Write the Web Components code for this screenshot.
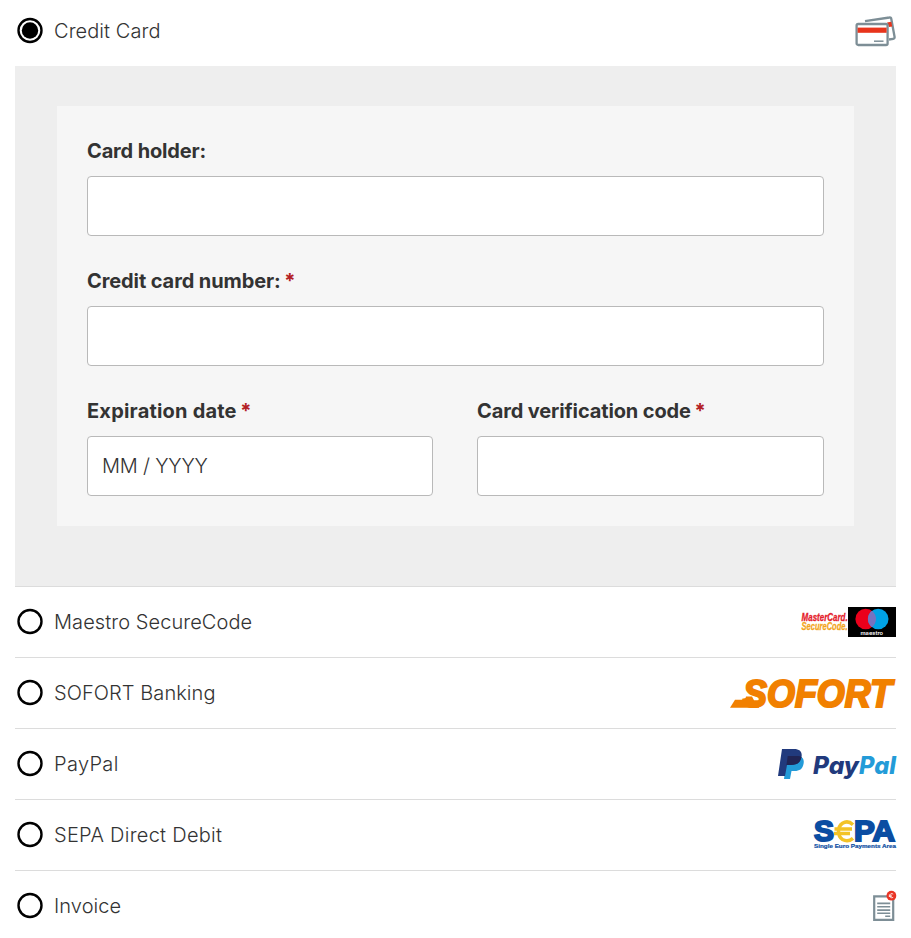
<!DOCTYPE html>
<html lang="en">
<head>
<meta charset="utf-8">
<title>Payment method</title>
<style>
body{margin:0;background:#fff;color:#333;font:300 20px/30px Inter,"Liberation Sans",sans-serif}
</style>
</head>
<body>
<payment-page></payment-page>
<script>
const logos = {
card: `<svg width="41" height="30" viewBox="0 0 41 30"><path d="M10 5.2 34.5 1.5Q36 1.2 36.3 3L39.6 21Q39.8 22.5 38.2 22.8L34 23.5" fill="#fff" stroke="#7d8e96" stroke-width="2.3"/><path d="M32 6.5 36.2 5.8 37.3 10.4 34 11Z" fill="#e8341c"/><rect x="1.6" y="8" width="31" height="21" rx="1.6" fill="#fff" stroke="#7d8e96" stroke-width="2.3"/><path d="M2.6 11.6h29v5.2h-29z" fill="#e8341c"/><path d="M19 25.2h9.5" stroke="#7d8e96" stroke-width="1.5"/></svg>`,
maestro: `<svg width="98" height="30" viewBox="0 0 98 30"><g font-family="Liberation Sans,sans-serif" font-weight="700" font-style="italic" font-size="10.8" stroke-width=".3"><text x="3.6" y="13.7" textLength="46" lengthAdjust="spacingAndGlyphs" fill="#e5202b" stroke="#e5202b">MasterCard.</text><text x="3.6" y="22.6" textLength="46" lengthAdjust="spacingAndGlyphs" fill="#f3a51c" stroke="#f3a51c">SecureCode.</text></g><path fill="#000" d="M50 0h48v30H50z"/><circle cx="67.7" cy="12" r="10.3" fill="#eb001b"/><circle cx="80.2" cy="12" r="10.3" fill="#00a2e5"/><path d="M73.95 3.8a10.3 10.3 0 0 1 0 16.4a10.3 10.3 0 0 1 0-16.4" fill="#7673c0"/><text x="62.5" y="27.5" textLength="22.5" lengthAdjust="spacingAndGlyphs" fill="#fff" font-family="Inter,sans-serif" font-weight="600" font-size="5.4">maestro</text></svg>`,
sofort: `<svg width="166" height="30" viewBox="0 0 166 30"><text x="13" y="28.7" textLength="149" lengthAdjust="spacingAndGlyphs" fill="#f18000" stroke="#f18000" stroke-width="2.2" font-family="Liberation Sans,sans-serif" font-weight="700" font-style="italic" font-size="39">SOFORT</text><path d="M0 29.8 5 21.8H15L16 18.6H22L24 22.2H29L29 29.8Z" fill="#f18000"/></svg>`,
paypal: `<svg width="118" height="30" viewBox="0 0 118 30"><path d="M9 7h10c5 0 7.7 3 6.5 8-1 5-4 7-9 7h-3l-1.5 8H6z" fill="#239bd8"/><path d="M4 0h12c6 0 8.5 3 7.5 8-1.2 6-5 8-11 8H9l-2 11H0z" fill="#213a7d"/><path d="M9.7 7H20q2 0 3.5 1c-1.2 6-5 8-11 8H8.5z" fill="#202454"/><g font-family="Inter,sans-serif" font-weight="800" font-style="italic" font-size="24"><text x="35" y="25.3" textLength="46" lengthAdjust="spacingAndGlyphs" fill="#213a7d">Pay</text><text x="81" y="25.3" textLength="37" lengthAdjust="spacingAndGlyphs" fill="#239bd8">Pal</text></g></svg>`,
sepa: `<svg width="82" height="30" viewBox="0 0 82 30"><g font-family="Liberation Sans,sans-serif" font-weight="700" fill="#0b4da2" stroke="#0b4da2"><text x="0" y="21.2" font-size="29.5" stroke-width="2" textLength="20" lengthAdjust="spacingAndGlyphs">S</text><text x="40" y="21.2" font-size="29.5" stroke-width="2" textLength="41" lengthAdjust="spacingAndGlyphs">PA</text><text x="0" y="28.3" font-size="6" stroke-width=".2" textLength="82" lengthAdjust="spacingAndGlyphs">Single Euro Payments Area</text></g><path d="M39 4.7Q34 0 28.5 3.2Q24.5 6 24.5 11.3Q24.5 17 28.5 19.5Q34 22.5 39 18.3M20.5 9H38M20 13.6H36" fill="none" stroke="#f3c326" stroke-width="3.5"/></svg>`,
invoice: `<svg width="23" height="30" viewBox="0 0 23 30"><path d="M1.2 5.4h19v23.4h-19z" fill="#fff" stroke="#7d8e96" stroke-width="2.2"/><path d="M4.2 12.4h13M4.2 15.8h13M4.2 19.1h13M4.2 22.3h13M12.2 25.2h5" stroke="#7d8e96" stroke-width="1.6"/><circle cx="18.4" cy="4.7" r="4.9" fill="#e93424"/><path d="M20.2 3.1q-3-1.6-3.4 1.6.4 3.2 3.4 1.6M15.8 4.2h3M15.8 5.4h3" fill="none" stroke="#fff" stroke-width=".8"/></svg>`
};

class ShadowElement extends HTMLElement {
  connectedCallback() {
    if (!this.shadowRoot) this.attachShadow({mode: "open"}).innerHTML = this.markup();
  }
}

customElements.define("payment-logo", class extends ShadowElement {
  markup() {
    return `<style>:host{display:block;height:30px}svg{display:block;overflow:visible}</style>${logos[this.getAttribute("name")]}`;
  }
});

customElements.define("radio-mark", class extends ShadowElement {
  markup() {
    return `<style>:host{display:block;width:30px;height:30px}svg{display:block}</style>
    <svg width="30" height="30"><circle cx="15" cy="14.5" r="11.5" fill="none" stroke="#000" stroke-width="2.4"/>${this.hasAttribute("checked") ? '<circle cx="15" cy="14.5" r="8.2"/>' : ""}</svg>`;
  }
});

customElements.define("payment-option", class extends ShadowElement {
  markup() {
    return `<style>
      :host{display:flex;align-items:center;height:70px;border-top:1px solid #dcdcdc}
      :host([checked]){height:66px;border:0;box-sizing:border-box;padding-bottom:4px}
      span{flex:1;padding-left:9px;white-space:nowrap;letter-spacing:var(--track,.07px)}
    </style><radio-mark ${this.hasAttribute("checked") ? "checked" : ""}></radio-mark><span><slot></slot></span><payment-logo name="${this.getAttribute("logo")}"></payment-logo>`;
  }
});

customElements.define("form-field", class extends ShadowElement {
  markup() {
    return `<style>
      :host{display:block}
      label{display:flex;align-items:center;gap:3.5px;height:30px;font-weight:700;white-space:nowrap;margin-bottom:10px}
      .name{letter-spacing:var(--track,0)}
      .required{color:#b32024;letter-spacing:0}
      .input{display:flex;align-items:center;box-sizing:border-box;height:60px;padding:0 14px;background:#fff;border:1px solid #b9b9b9;border-radius:4px}
      .input span{letter-spacing:var(--input-track,0)}
    </style><label><span class="name">${this.getAttribute("label")}</span>${this.hasAttribute("required") ? '<span class="required">*</span>' : ""}</label><div class="input"><span><slot></slot></span></div>`;
  }
});

customElements.define("card-form", class extends ShadowElement {
  markup() {
    return `<style>
      :host{display:block;background:#eee;padding:40px 42px 60px}
      section{background:#f6f6f6;padding:30px;display:grid;grid-template-columns:346px 347px;column-gap:44px;row-gap:30px}
      .wide{grid-column:1/3}
    </style><section>
      <form-field class="wide" label="Card holder:" style="--track:-.15px"></form-field>
      <form-field class="wide" label="Credit card number:" style="--track:-.1px" required></form-field>
      <form-field label="Expiration date" style="--track:.2px;--input-track:-.2px" required>MM / YYYY</form-field>
      <form-field label="Card verification code" style="--track:-.12px" required></form-field>
    </section>`;
  }
});

customElements.define("payment-page", class extends ShadowElement {
  markup() {
    return `<style>:host{display:block;padding:0 15px}</style>
      <payment-option logo="card" checked>Credit Card</payment-option>
      <card-form></card-form>
      <payment-option logo="maestro">Maestro SecureCode</payment-option>
      <payment-option logo="sofort">SOFORT Banking</payment-option>
      <payment-option logo="paypal" style="--track:.35px">PayPal</payment-option>
      <payment-option logo="sepa" style="--track:.27px">SEPA Direct Debit</payment-option>
      <payment-option logo="invoice">Invoice</payment-option>`;
  }
});
</script>
</body>
</html>
